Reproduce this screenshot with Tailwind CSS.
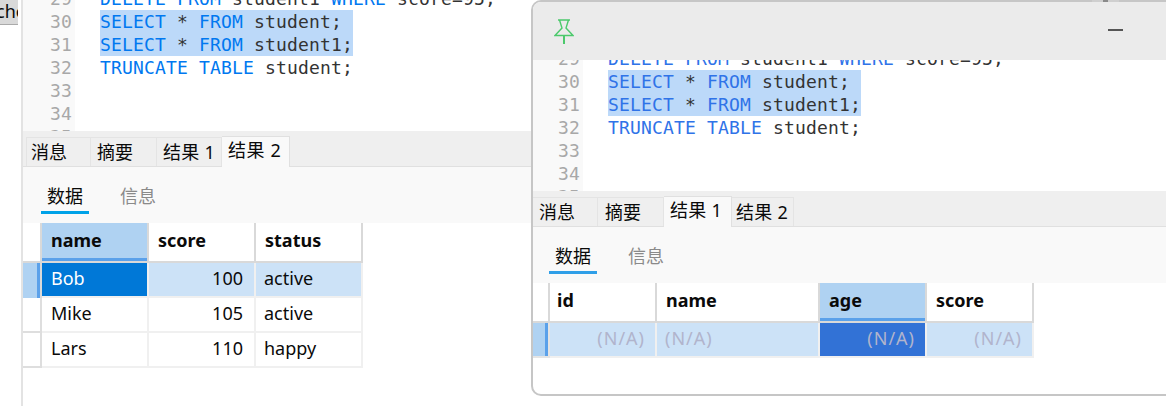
<!DOCTYPE html>
<html lang="en">
<head>
    <meta charset="UTF-8">
    <title>SQL editor</title>
    <script src="https://cdn.jsdelivr.net/npm/@tailwindcss/browser@4"></script>
</head>
<body class="relative w-[1166px] h-[406px] overflow-hidden bg-white font-['Noto_Sans','Noto_Sans_CJK_SC',sans-serif] text-[18px] text-[#0a0a0a]">
    <div class="flex h-full">
        <!-- Sliver of the window behind -->
        <div class="w-[21px] shrink-0">
            <div class="w-[18px] h-[25px] bg-[#d9d9d9] border-b border-[#aaaaaa] overflow-hidden">
                <div class="-ml-[4px] leading-[22px] whitespace-nowrap">che</div>
            </div>
        </div>

        <!-- Main panel -->
        <div class="flex-1 flex flex-col border-l-2 border-[#e3e3e3]">
            <!-- Editor -->
            <div class="flex h-[131px] overflow-hidden font-['DejaVu_Sans_Mono',monospace] text-[18px] leading-[23px] tracking-[0.16px]">
                <div class="w-[52px] bg-[#f9f9f9] pr-[3px] text-right text-[#a8a8a8] -mt-[13px]">
                    <div>29</div><div>30</div><div>31</div><div>32</div><div>33</div><div>34</div><div>35</div>
                </div>
                <div class="pl-[25px] -mt-[13px] whitespace-nowrap text-[#333]">
                    <div><span class="text-[#0078f0]">DELETE FROM</span> student1 <span class="text-[#0078f0]">WHERE</span> score=95;</div>
                    <div class="w-[253px] bg-[#bcd9f9]"><span class="text-[#0078f0]">SELECT</span> * <span class="text-[#0078f0]">FROM</span> student;</div>
                    <div class="w-[253px] bg-[#bcd9f9]"><span class="text-[#0078f0]">SELECT</span> * <span class="text-[#0078f0]">FROM</span> student1;</div>
                    <div><span class="text-[#0078f0]">TRUNCATE TABLE</span> student;</div>
                </div>
            </div>

            <!-- Result tabs -->
            <div class="flex items-end h-[36px] pl-[3px] bg-[#efefef] border-b border-[#e0e0e0]">
                <div class="w-[65px] h-[29px] pl-[4px] leading-[28px] border-r border-l border-t border-[#e4e4e4]">消息</div>
                <div class="w-[66px] h-[29px] pl-[6px] leading-[28px] border-r border-t border-[#e4e4e4]">摘要</div>
                <div class="w-[65px] h-[29px] pl-[6px] leading-[28px] tracking-[0.3px] border-r border-t border-[#e4e4e4]">结果 1</div>
                <div class="w-[68px] h-[31px] -mb-px pl-[6px] leading-[27px] tracking-[0.6px] bg-[#f9f9f9] border-r border-t border-[#e0e0e0]">结果 2</div>
            </div>

            <!-- Data / info tabs -->
            <div class="flex h-[56px] pl-[18px] bg-[#f9f9f9]">
                <div class="w-[48px] h-[47px] pt-[16px] text-center leading-[26px] border-b-[3px] border-[#00a2e8]">数据</div>
                <div class="ml-[31px] pt-[16px] leading-[26px] text-[#8a8a8a]">信息</div>
            </div>

            <!-- Result grid -->
            <div class="grid grid-cols-[19px_107px_107px_107px] grid-rows-[40px_35px_35px_35px] w-fit">
                <div class="border-r-2 border-b-2 border-[#d9d9d9]"></div>
                <div class="pl-[9px] leading-[35px] font-bold bg-[#afd2f2] border-r-2 border-b-2 border-[#d9d9d9] shadow-[inset_0_-3px_0_#5ba1ea]">name</div>
                <div class="pl-[9px] leading-[35px] font-bold border-r-2 border-b-2 border-[#d9d9d9]">score</div>
                <div class="pl-[9px] leading-[35px] font-bold border-r-2 border-b-2 border-[#d9d9d9]">status</div>

                <div class="flex border-r-2 border-[#d9d9d9]"><div class="w-[14px] bg-[#afd2f2]"></div><div class="w-[3px] bg-[#5ba1ea]"></div></div>
                <div class="pl-[9px] leading-[31px] bg-[#0078d7] text-white border-r-2 border-b-2 border-[#f0f0f0]">Bob</div>
                <div class="pr-[11px] text-right leading-[31px] bg-[#cce2f7] border-r-2 border-b-2 border-[#f0f0f0]">100</div>
                <div class="pl-[8px] leading-[31px] bg-[#cce2f7] border-r-2 border-b-2 border-[#f0f0f0]">active</div>

                <div class="border-r-2 border-b-2 border-[#dedede]"></div>
                <div class="pl-[9px] leading-[31px] border-r-2 border-b-2 border-[#f0f0f0]">Mike</div>
                <div class="pr-[11px] text-right leading-[31px] border-r-2 border-b-2 border-[#f0f0f0]">105</div>
                <div class="pl-[8px] leading-[31px] border-r-2 border-b-2 border-[#f0f0f0]">active</div>

                <div class="border-r-2 border-b-2 border-[#dedede]"></div>
                <div class="pl-[9px] leading-[31px] border-r-2 border-b-2 border-[#f0f0f0]">Lars</div>
                <div class="pr-[11px] text-right leading-[31px] border-r-2 border-b-2 border-[#f0f0f0]">110</div>
                <div class="pl-[8px] leading-[31px] border-r-2 border-b-2 border-[#f0f0f0]">happy</div>
            </div>
        </div>
    </div>

    <!-- Floating pinned result window -->
    <div class="absolute left-[531px] top-0 w-[650px] h-[396px] flex flex-col bg-white border-2 border-[#c6c6c6] rounded-[10px] overflow-hidden">
        <div class="h-[58px] shrink-0 relative bg-[#ebebeb]">
            <svg class="absolute left-[21px] top-[17px]" width="20" height="26" viewBox="0 0 20 26" fill="none" stroke="#4cc96c" stroke-width="1.4">
                <path d="M4 1h12M5.5 1 8 9 1 16.5h18L12 9l2.5-8" />
                <path d="M10 17v8" stroke-width="2" />
            </svg>
            <div class="absolute left-[575px] top-[27px] w-[15px] h-[2px] bg-[#555555]"></div>
        </div>

        <!-- Editor -->
        <div class="flex h-[131px] shrink-0 overflow-hidden font-['DejaVu_Sans_Mono',monospace] text-[18px] leading-[23px] tracking-[0.16px]">
            <div class="w-[50px] bg-[#f9f9f9] pr-[3px] text-right text-[#a8a8a8] -mt-[13px]">
                <div>29</div><div>30</div><div>31</div><div>32</div><div>33</div><div>34</div><div>35</div>
            </div>
            <div class="pl-[25px] -mt-[13px] whitespace-nowrap text-[#333]">
                <div><span class="text-[#2f73e8]">DELETE FROM</span> student1 <span class="text-[#2f73e8]">WHERE</span> score=95;</div>
                <div class="w-[253px] bg-[#bcd9f9]"><span class="text-[#2f73e8]">SELECT</span> * <span class="text-[#2f73e8]">FROM</span> student;</div>
                <div class="w-[253px] bg-[#bcd9f9]"><span class="text-[#2f73e8]">SELECT</span> * <span class="text-[#2f73e8]">FROM</span> student1;</div>
                <div><span class="text-[#2f73e8]">TRUNCATE TABLE</span> student;</div>
            </div>
        </div>

        <!-- Result tabs -->
        <div class="flex items-end h-[36px] shrink-0 bg-[#efefef] border-b border-[#e0e0e0]">
            <div class="w-[65px] h-[29px] pl-[6px] leading-[28px] border-r border-t border-[#e4e4e4]">消息</div>
            <div class="w-[66px] h-[29px] pl-[7px] leading-[28px] border-r border-t border-[#e4e4e4]">摘要</div>
            <div class="w-[68px] h-[31px] -mb-px pl-[6px] leading-[27px] tracking-[0.3px] bg-[#f9f9f9] border-r border-t border-[#e0e0e0]">结果 1</div>
            <div class="w-[62px] h-[29px] pl-[4px] leading-[28px] tracking-[0.3px] border-r border-t border-[#e4e4e4]">结果 2</div>
        </div>

        <!-- Data / info tabs -->
        <div class="flex h-[56px] shrink-0 pl-[16px] bg-[#f9f9f9]">
            <div class="w-[48px] h-[47px] pt-[16px] text-center leading-[26px] border-b-[3px] border-[#2f9fe8]">数据</div>
            <div class="ml-[31px] pt-[16px] leading-[26px] text-[#8a8a8a]">信息</div>
        </div>

        <!-- Result grid -->
        <div class="grid grid-cols-[17px_107px_163px_107px_107px] grid-rows-[40px_35px] w-fit">
            <div class="border-r-2 border-b-2 border-[#d9d9d9]"></div>
            <div class="pl-[7px] leading-[35px] font-bold border-r-2 border-b-2 border-[#d9d9d9]">id</div>
            <div class="pl-[9px] leading-[35px] font-bold border-r-2 border-b-2 border-[#d9d9d9]">name</div>
            <div class="pl-[9px] leading-[35px] font-bold bg-[#afd2f2] border-r-2 border-b-2 border-[#d9d9d9] shadow-[inset_0_-3px_0_#5ba1ea]">age</div>
            <div class="pl-[9px] leading-[35px] font-bold border-r-2 border-b-2 border-[#d9d9d9]">score</div>

            <div class="flex border-r-2 border-[#e4e4e4] border-b-2"><div class="w-[12px] bg-[#afd2f2]"></div><div class="w-[3px] bg-[#5ba1ea]"></div></div>
            <div class="pr-[10px] text-right leading-[31px] tracking-[1px] text-[#b1b4cc] bg-[#cce2f7] border-r-2 border-b-2 border-[#f0f0f0]">(N/A)</div>
            <div class="pl-[8px] leading-[31px] tracking-[1px] text-[#b1b4cc] bg-[#cce2f7] border-r-2 border-b-2 border-[#f0f0f0]">(N/A)</div>
            <div class="pr-[10px] text-right leading-[31px] tracking-[1px] text-[#b1b4cc] bg-[#3272d6] border-r-2 border-b-2 border-[#f0f0f0]">(N/A)</div>
            <div class="pr-[10px] text-right leading-[31px] tracking-[1px] text-[#b1b4cc] bg-[#cce2f7] border-r-2 border-b-2 border-[#f0f0f0]">(N/A)</div>
        </div>
    </div>

    <!-- Cursor trace on the window's top edge -->
    <div class="absolute left-[1092px] top-0 flex justify-center w-[27px] h-[2px] bg-[#cfcfcf]"><div class="w-[5px] bg-[#8a8a8a]"></div></div>
</body>
</html>
